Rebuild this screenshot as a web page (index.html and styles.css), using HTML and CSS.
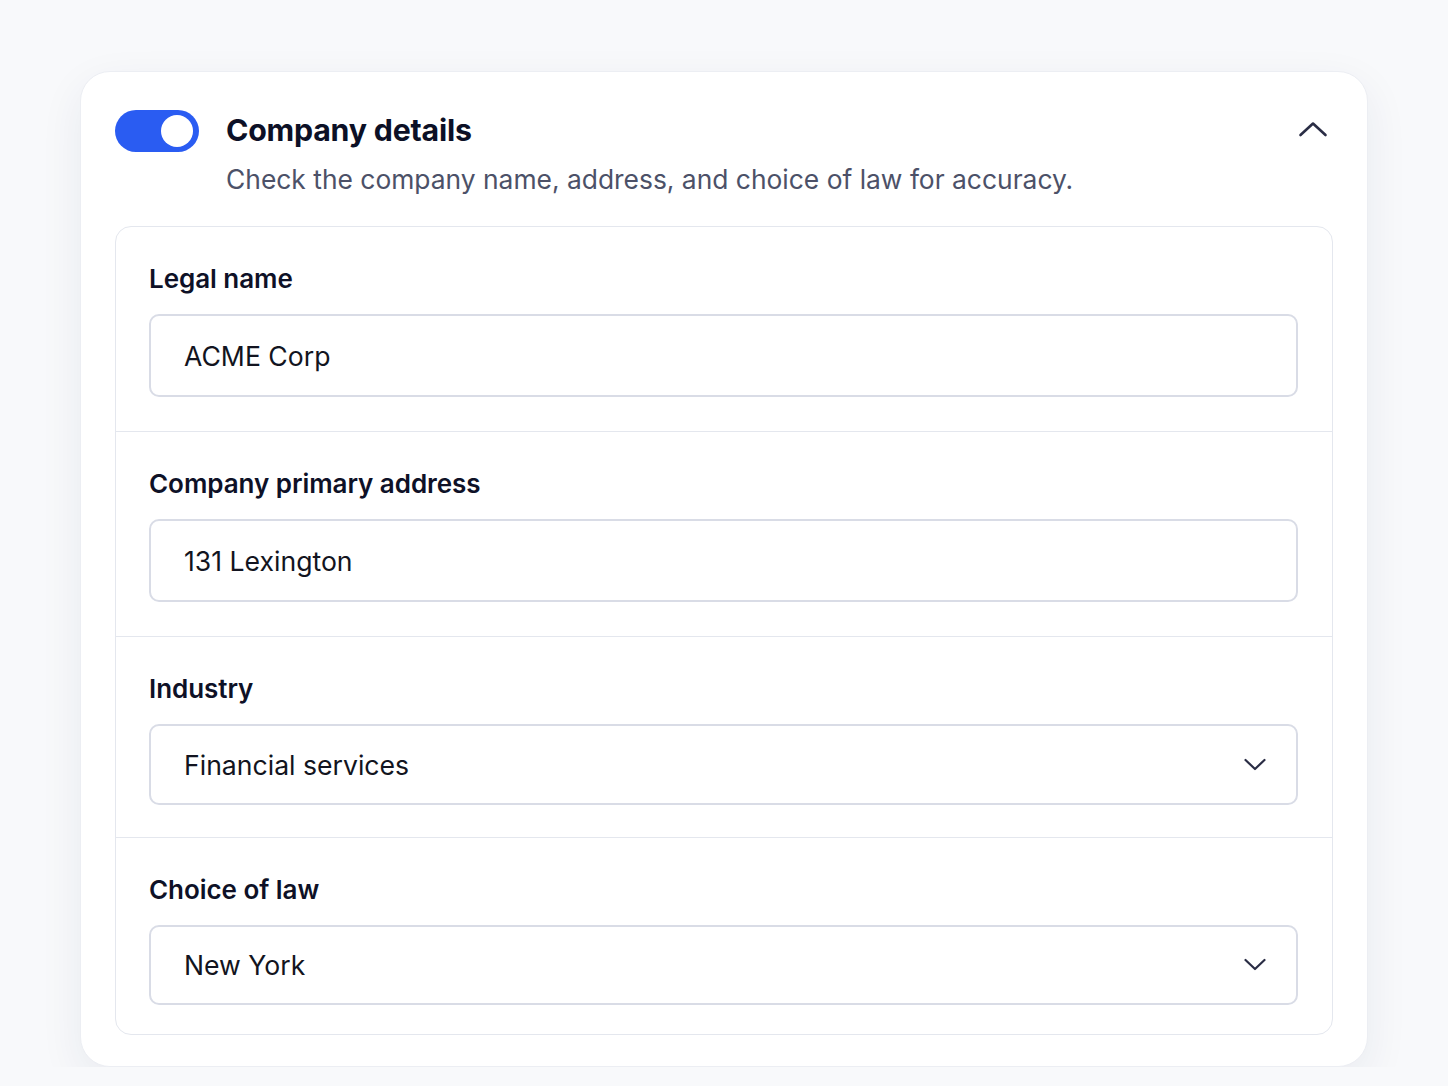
FILE: index.html
```html
<!DOCTYPE html>
<html lang="en">
<head>
  <meta charset="UTF-8">
  <meta name="viewport" content="width=device-width, initial-scale=1.0">
  <title>Company details</title>
  <link rel="stylesheet" href="styles.css">
</head>
<body>
  <div class="card">
    <div class="card-head">
      <div class="toggle on"><span class="knob"></span></div>
      <div class="head-text">
        <h2 class="title">Company details</h2>
        <p class="subtitle">Check the company name, address, and choice of law for accuracy.</p>
      </div>
      <button class="collapse" aria-label="Collapse">
        <svg width="30" height="16" viewBox="0 0 30 16" fill="none">
          <path d="M2.5 14 L15 2.5 L27.5 14" stroke="#2a2d45" stroke-width="2.6" stroke-linecap="round" stroke-linejoin="round"/>
        </svg>
      </button>
    </div>

    <div class="fields">
      <div class="field">
        <label class="label">Legal name</label>
        <div class="control">ACME Corp</div>
      </div>
      <div class="field">
        <label class="label">Company primary address</label>
        <div class="control">131 Lexington</div>
      </div>
      <div class="field">
        <label class="label">Industry</label>
        <div class="control select">
          <span>Financial services</span>
          <svg class="caret" width="22" height="14" viewBox="0 0 22 14" fill="none">
            <path d="M1.5 2 L11 11 L20.5 2" stroke="#2a2d45" stroke-width="2.2" stroke-linecap="round" stroke-linejoin="round"/>
          </svg>
        </div>
      </div>
      <div class="field">
        <label class="label">Choice of law</label>
        <div class="control select">
          <span>New York</span>
          <svg class="caret" width="22" height="14" viewBox="0 0 22 14" fill="none">
            <path d="M1.5 2 L11 11 L20.5 2" stroke="#2a2d45" stroke-width="2.2" stroke-linecap="round" stroke-linejoin="round"/>
          </svg>
        </div>
      </div>
    </div>
  </div>
</body>
</html>
```

FILE: styles.css
```css
body {
  margin: 0;
  font-family: Inter, "Noto Sans", sans-serif;
  background-color: #f8f9fb;
  color: #0e1127;
}
.card {
  margin: 71px 80px 0 80px;
  box-sizing: border-box;
  width: 1288px;
  background: #fff;
  border: 1.5px solid #eceef3;
  border-radius: 30px;
  padding: 38px 34px 31px 34px;
  box-shadow: 0 14px 44px rgba(30, 40, 80, 0.07);
}
.card-head {
  display: flex;
  align-items: flex-start;
}
.toggle {
  width: 84px;
  height: 42px;
  border-radius: 21px;
  background: #2a5cf2;
  flex-shrink: 0;
  display: flex;
  align-items: center;
  justify-content: flex-end;
  padding: 0 6px;
  box-sizing: border-box;
}
.knob {
  width: 32px;
  height: 32px;
  border-radius: 50%;
  background: #fff;
}
.head-text {
  flex: 1;
  margin-left: 27px;
}
.title {
  margin: 0;
  font-size: 30.3px;
  line-height: 40px;
  font-weight: 650;
  color: #0c1026;
  letter-spacing: -0.2px;
}
.subtitle {
  margin: 11px 0 0 0;
  font-size: 26.4px;
  line-height: 36px;
  color: #4c5168;
}
.collapse {
  background: none;
  border: none;
  padding: 0;
  margin: 11px 5px 0 0;
  cursor: pointer;
  display: block;
}
.fields {
  margin-top: 29px;
  border: 1.5px solid #e4e7ee;
  border-radius: 16px;
}
.field {
  padding: 35px 34px 34px 33px;
  border-top: 1.5px solid #e4e7ee;
}
.field:first-child {
  border-top: none;
}
.field:nth-child(3) {
  padding-bottom: 32px;
}
.field:nth-child(3) .control {
  height: 81px;
}
.field:last-child {
  padding-bottom: 29px;
}
.field:last-child .control {
  height: 80px;
}
.label {
  display: block;
  font-size: 26px;
  line-height: 34px;
  font-weight: 600;
  color: #0e1127;
  letter-spacing: -0.05px;
}
.control {
  margin-top: 18px;
  height: 83px;
  box-sizing: border-box;
  border: 2px solid #d9dce6;
  border-radius: 10px;
  padding: 0 30px 0 33px;
  display: flex;
  align-items: center;
  font-size: 26.6px;
  color: #121420;
}
.select {
  justify-content: space-between;
}
.caret {
  display: block;
}
```
